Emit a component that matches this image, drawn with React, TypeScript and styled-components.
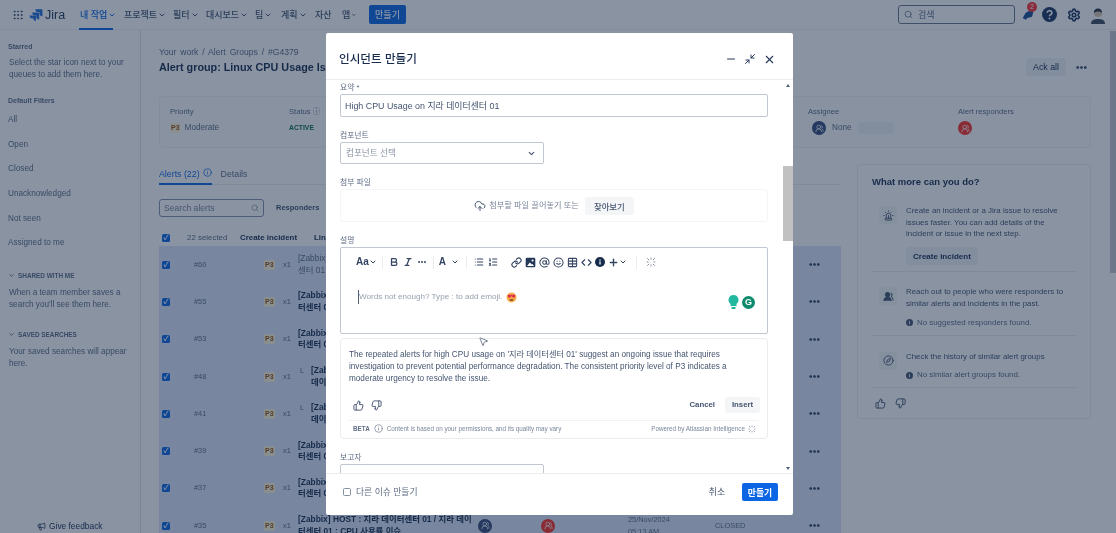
import React from 'react'
import styled, { createGlobalStyle } from 'styled-components'
import {
  AtSign, Bold, ChevronDown, Code, CloudUpload, Compass, Grip, Info, Italic,
  Link, List, ListOrdered, Megaphone, Minimize2, Minus, MoreHorizontal, MousePointer2, Plus, Search,
  Settings, Siren, Smile, Table, ThumbsDown, ThumbsUp, UsersRound, X,
} from 'lucide-react'

const sans = `"Liberation Sans", "Noto Sans CJK KR", sans-serif`
const ink = '#172b4d'
const subtle = '#5e6c84'
const line = '#dfe1e6'

const GlobalStyle = createGlobalStyle`
  html, body { margin: 0; height: 100%; overflow: hidden; background: #fff; }
  * { box-sizing: border-box; }
  #root { height: 100%; }
`

const Page = styled.div`
  position: relative;
  height: 533px;
  overflow: hidden;
  background: #fff;
  color: ${ink};
  font: 9px/12px ${sans};
  filter: blur(0.6px);
`

/* top navigation */
const TopNav = styled.header`
  height: 30px;
  display: flex;
  align-items: center;
  padding: 0 11px 0 12px;
  border-bottom: 1px solid #eef0f3;
`
const Logo = styled.div`
  flex: none;
  display: flex;
  align-items: center;
  gap: 2px;
  width: 51px;
  margin-left: 5px;
  font-size: 12.5px;
  color: #253858;
`
const NavItem = styled.div<{ $active?: boolean; $w: number }>`
  position: relative;
  flex: none;
  width: ${p => p.$w}px;
  height: 30px;
  display: flex;
  align-items: center;
  gap: 1px;
  font-size: 9px;
  font-weight: 500;
  color: ${p => (p.$active ? '#0c66e4' : '#44546f')};
  ${p => p.$active && `
    &::after {
      content: '';
      position: absolute;
      left: -1px;
      bottom: 0;
      width: 34px;
      height: 2px;
      background: #0c66e4;
    }
  `}
`
const NavButton = styled.button`
  width: 37px;
  height: 19px;
  margin-left: 12px;
  padding: 0;
  border: 0;
  border-radius: 2px;
  background: #0c66e4;
  color: #fff;
  font: 500 9px ${sans};
`
const NavRight = styled.div`
  margin-left: auto;
  display: flex;
  align-items: center;
  gap: 10px;
`
const SearchBox = styled.div`
  width: 117px;
  height: 19px;
  display: flex;
  align-items: center;
  gap: 5px;
  padding: 0 5px;
  margin-right: -4px;
  border: 1px solid #6b778c;
  border-radius: 3px;
  color: ${subtle};
`
const Badge = styled.div`
  position: absolute;
  top: -6px;
  left: 6px;
  width: 10px;
  height: 10px;
  border-radius: 50%;
  background: #ff2f2f;
  color: #fff;
  font-size: 7px;
  line-height: 10px;
  text-align: center;
`
const BellWrap = styled.div`
  position: relative;
  width: 14px;
  height: 14px;
  margin-right: -3px;
`

/* layout */
const Shell = styled.div`
  display: flex;
  height: 503px;
`
const Sidebar = styled.aside`
  position: relative;
  width: 141px;
  flex: none;
  padding: 11px 8px 0;
  border-right: 1px solid ${line};
  color: ${subtle};
`
const SideHead = styled.div`
  height: 12px;
  font-weight: 700;
  font-size: 7px;
`
const SideNote = styled.p<{ $mt?: number }>`
  margin: ${p => p.$mt ?? 4}px 0 0 1px;
  font-size: 8.2px;
  line-height: 12px;
  width: 124px;
`
const FilterHead = styled(SideHead)`
  margin-top: 14px;
`
const FilterList = styled.div`
  margin-top: 1px;
`
const FilterItem = styled.div`
  height: 24.6px;
  display: flex;
  align-items: center;
  font-size: 8.2px;
`
const SectionHead = styled.div<{ $gap: number }>`
  display: flex;
  align-items: center;
  gap: 3px;
  height: 12px;
  margin-top: ${p => p.$gap}px;
  font-size: 6.4px;
  font-weight: 700;
`
const Feedback = styled.div`
  position: absolute;
  left: 37px;
  bottom: 1px;
  display: flex;
  align-items: center;
  gap: 3px;
  font-size: 8.4px;
  color: ${ink};
`
const Main = styled.main`
  flex: 1;
  display: flex;
  min-width: 0;
`
const Content = styled.div`
  flex: 1;
  min-width: 0;
  padding: 16px 19px 0 18px;
`
const PageBar = styled.div`
  width: 6px;
  flex: none;
`
const PageThumb = styled.div`
  height: 242px;
  margin-top: 1px;
  background: #c4c7cc;
`
const Crumbs = styled.div`
  height: 12px;
  color: ${subtle};
  font-size: 8.6px;
  word-spacing: 1.5px;
`
const TitleRow = styled.div`
  display: flex;
  align-items: center;
  height: 20px;
  margin-top: -1px;
`
const PageTitle = styled.h1`
  margin: 0;
  font-size: 10.8px;
  font-weight: 700;
  color: ${ink};
`
const TitleActions = styled.div`
  margin-left: auto;
  display: flex;
  align-items: center;
  gap: 6px;
  padding-right: 1px;
`
const GreyButton = styled.button`
  height: 18px;
  padding: 0 7px;
  border: 0;
  border-radius: 3px;
  background: #f1f2f4;
  color: ${ink};
  font: 400 8.8px ${sans};
`
const IconSlot = styled.div`
  width: 18px;
  height: 18px;
  display: grid;
  place-items: center;
  color: ${ink};
`

/* summary card */
const SummaryCard = styled.section`
  height: 52px;
  margin-top: 19px;
  padding: 9px 10px;
  display: grid;
  grid-template-columns: 119px 519px 150px 1fr;
  border: 1px solid #f1f2f4;
  border-radius: 4px;
  background: #fcfcfd;
`
const SummaryLabel = styled.div`
  font-size: 7.6px;
  color: ${subtle};
`
const SummaryValue = styled.div<{ $indent?: number; $gap?: number }>`
  display: flex;
  align-items: center;
  gap: ${p => p.$gap ?? 4}px;
  height: 18px;
  margin: 1px 0 0 ${p => p.$indent ?? 0}px;
  font-size: 8.2px;
  color: ${subtle};
`
const Priority = styled.span`
  justify-self: start;
  padding: 0 1px;
  border-radius: 2px;
  background: #fff7d6;
  color: #974f0c;
  font-size: 7px;
  font-weight: 700;
  line-height: 10px;
`
const Status = styled.span`
  color: #0b6e4a;
  font-size: 6.8px;
  font-weight: 700;
`
const Avatar = styled.div<{ $red?: boolean; $size?: number }>`
  width: ${p => p.$size ?? 14}px;
  height: ${p => p.$size ?? 14}px;
  display: grid;
  place-items: center;
  border-radius: 50%;
  background: ${p => (p.$red ? '#ff2f22' : '#34497a')};
  color: #fff;
`
const Redacted = styled.div`
  width: 36px;
  height: 12px;
  background: #f1f2f4;
`

/* alerts */
const Columns = styled.div`
  display: flex;
  gap: 16px;
  margin-top: 16px;
`
const AlertColumn = styled.div`
  width: 682px;
  flex: none;
`
const Tabs = styled.div`
  height: 21px;
  display: flex;
  gap: 9px;
  border-bottom: 1px solid #ebecf0;
`
const Tab = styled.div<{ $active?: boolean }>`
  height: 21px;
  padding-top: 4px;
  display: flex;
  gap: 3px;
  font-size: 8.8px;
  color: ${p => (p.$active ? '#0c66e4' : subtle)};
  border-bottom: 2px solid ${p => (p.$active ? '#0c66e4' : 'transparent')};
`
const FilterBar = styled.div`
  display: flex;
  align-items: center;
  gap: 12px;
  margin-top: 14px;
  height: 18px;
`
const AlertSearch = styled.div`
  width: 105px;
  height: 18px;
  display: flex;
  align-items: center;
  justify-content: space-between;
  padding: 0 4px;
  border: 1px solid #8590a2;
  border-radius: 3px;
  color: #7a869a;
  font-size: 8.6px;
`
const FilterLabel = styled.div`
  font-size: 7.5px;
  font-weight: 700;
  color: #44546f;
`
const SelectRow = styled.div`
  height: 17px;
  margin-top: 12px;
  padding-left: 3px;
  display: grid;
  grid-template-columns: 25px 53px 74px 1fr;
  align-items: center;
  font-size: 7.9px;
  font-weight: 700;
`
const Muted = styled.span`
  color: ${subtle};
  font-weight: 400;
`
const Check = styled.span`
  width: 8px;
  height: 8px;
  border-radius: 1.5px;
  background: #0c66e4;
  display: grid;
  place-items: center;
  color: #fff;
  font-size: 7px;
  line-height: 8px;
  font-weight: 700;
`
const AlertRow = styled.div`
  height: 37.3px;
  padding-left: 3px;
  display: grid;
  grid-template-columns: 32px 70px 19px 15px 180px 63px 87px 87px 93px 1fr;
  align-items: center;
  background: #dce6f8;
  font-size: 7.4px;
  color: ${subtle};
`
const AlertTitle = styled.div<{ $muted?: boolean; $lead?: boolean }>`
  position: relative;
  padding-left: ${p => (p.$lead ? 13 : 0)}px;
  font-size: 8.4px;
  line-height: 11.5px;
  font-weight: ${p => (p.$muted ? 400 : 700)};
  color: ${p => (p.$muted ? subtle : ink)};
  word-break: ${p => (p.$lead ? 'keep-all' : 'normal')};
`
const LeadMark = styled.span`
  position: absolute;
  left: 2px;
  top: 0;
  font-weight: 400;
  font-size: 7.4px;
  color: ${subtle};
`
const Dots = styled.div`
  display: flex;
  color: ${ink};
`

/* right panel */
const HelpPanel = styled.aside`
  width: 234px;
  height: 255px;
  flex: none;
  padding: 10px 14px 0;
  border: 1px solid #ebecf0;
  border-radius: 4px;
`
const HelpTitle = styled.h2`
  margin: 0;
  font-size: 9.5px;
  line-height: 14px;
  font-weight: 700;
`
const HelpItem = styled.div<{ $mt: number }>`
  display: grid;
  grid-template-columns: 34px 1fr;
  margin-top: ${p => p.$mt}px;
  padding-bottom: 6px;
  border-bottom: 1px solid #ebecf0;
`
const HelpIcon = styled.div`
  width: 18px;
  height: 18px;
  margin: 1px 0 0 7px;
  display: grid;
  place-items: center;
  border-radius: 3px;
  background: #f7f8f9;
  color: #44546f;
`
const HelpText = styled.p`
  margin: 0;
  max-width: 165px;
  font-size: 7.9px;
  line-height: 11.7px;
  color: #44546f;
`
const HelpNote = styled.div`
  display: flex;
  align-items: center;
  gap: 4px;
  margin-top: 7px;
  font-size: 7.9px;
  line-height: 12px;
  color: ${subtle};
`
const HelpButton = styled(GreyButton)`
  display: block;
  margin-top: 7px;
  font-size: 8px;
  font-weight: 700;
`
const Votes = styled.div<{ $gap: number }>`
  display: flex;
  gap: ${p => p.$gap}px;
  color: #44546f;
`
const HelpVotes = styled(Votes)`
  margin: 10px 0 0 3px;
`

/* blanket and modal */
const Blanket = styled.div`
  position: absolute;
  inset: 0;
  padding: 33px 0 0 326px;
  background: rgba(20, 40, 70, 0.5);
`
const Modal = styled.div`
  width: 467px;
  height: 482px;
  display: flex;
  flex-direction: column;
  background: #fff;
  border-radius: 2px;
`
const ModalHeader = styled.div`
  height: 47px;
  flex: none;
  display: flex;
  align-items: center;
  padding: 6px 17px 0 13px;
  border-bottom: 1px solid #ebecf0;
`
const ModalTitle = styled.h2`
  margin: 0;
  font-size: 11.6px;
  font-weight: 500;
  color: #172b4d;
`
const WindowButtons = styled.div`
  margin-left: auto;
  display: flex;
  align-items: center;
  gap: 7px;
  color: #253858;
`
const ModalBody = styled.div`
  flex: 1;
  min-height: 0;
  display: flex;
`
const FormArea = styled.div`
  width: 443px;
  flex: none;
  padding: 2px 0 0 14px;
  overflow: hidden;
`
const Field = styled.div`
  width: 428px;
  margin-bottom: 13px;
`
const FieldLabel = styled.div`
  height: 11px;
  margin-bottom: 1px;
  font-size: 7.8px;
  line-height: 11px;
  color: #5e6c84;
`
const TextInput = styled.div`
  height: 23px;
  display: flex;
  align-items: center;
  padding: 0 4px;
  border: 1px solid #c1c7d0;
  border-radius: 2px;
  font-size: 8.9px;
  color: #44546f;
`
const SelectBox = styled.div`
  width: 204px;
  height: 22px;
  display: flex;
  align-items: center;
  justify-content: space-between;
  padding: 0 7px 0 5px;
  border: 1px solid #c1c7d0;
  border-radius: 2px;
  font-size: 8.6px;
  color: #8993a4;
`
const DropZone = styled.div`
  height: 33px;
  margin-top: 1px;
  display: flex;
  align-items: center;
  justify-content: center;
  gap: 3px;
  border: 1px solid #f4f5f7;
  border-radius: 3px;
  font-size: 8.2px;
  color: #7a869a;
`
const BrowseButton = styled.button`
  width: 49px;
  height: 18px;
  margin-left: 3px;
  padding: 0;
  border: 0;
  border-radius: 3px;
  background: #f4f5f7;
  color: #44546f;
  font: 500 8.4px ${sans};
`
const Editor = styled.div`
  position: relative;
  height: 87px;
  border: 1px solid #c1c7d0;
  border-radius: 2px;
`
const Toolbar = styled.div`
  height: 28px;
  padding-left: 15px;
  display: flex;
  align-items: center;
  color: #344563;
`
const ToolGroup = styled.div<{ $gap: number; $ml?: number }>`
  display: flex;
  align-items: center;
  gap: ${p => p.$gap}px;
  margin-left: ${p => p.$ml ?? 0}px;
`
const ToolSep = styled.div<{ $ml: number; $mr: number }>`
  width: 1px;
  height: 13px;
  margin: 0 ${p => p.$mr}px 0 ${p => p.$ml}px;
  background: #ebecf0;
`
const FontPick = styled.div`
  display: flex;
  align-items: center;
  font-size: 10px;
  font-weight: 700;
`
const Placeholder = styled.div`
  display: flex;
  align-items: center;
  gap: 4px;
  height: 14px;
  margin: 14px 0 0 17px;
  border-left: 1px solid #505f79;
  font-size: 8.1px;
  color: #97a0af;
`
const Grammarly = styled.div`
  position: absolute;
  right: 12px;
  top: 47px;
  display: flex;
  align-items: center;
  gap: 3px;
`
const GrammarlyDot = styled.div`
  width: 13px;
  height: 13px;
  border-radius: 50%;
  background: #0f8a6d;
  color: #fff;
  font-size: 9px;
  font-weight: 700;
  line-height: 13px;
  text-align: center;
`
const Pointer = styled.div`
  position: absolute;
  left: 478px;
  top: 336px;
  color: #6b778c;
`
const AiBox = styled.div`
  width: 428px;
  height: 101px;
  margin: -9px 0 13px;
  padding: 10px 8px 0;
  border: 1px solid #ebecf0;
  border-radius: 4px;
`
const AiText = styled.p`
  margin: 0;
  font-size: 8.2px;
  line-height: 12px;
  color: #44546f;
`
const AiActions = styled.div`
  display: flex;
  align-items: center;
  margin: 12px -1px 0 0;
  height: 16px;
  padding: 0 0 0 4px;
`
const AiButtons = styled.div`
  margin-left: auto;
  display: flex;
  align-items: center;
  gap: 10px;
  font-size: 7.8px;
  font-weight: 700;
  color: #44546f;
`
const InsertButton = styled.div`
  width: 35px;
  height: 16px;
  display: flex;
  align-items: center;
  justify-content: center;
  border-radius: 3px;
  background: #f4f5f7;
`
const AiFoot = styled.div`
  display: flex;
  align-items: center;
  gap: 4px;
  height: 16px;
  margin-top: 7px;
  padding: 0 3px 0 4px;
  border-top: 1px solid #f1f2f4;
  font-size: 6.3px;
  color: #7a869a;
`
const Beta = styled.b`
  font-weight: 700;
  color: #5e6c84;
`
const AiCredit = styled.div`
  margin-left: auto;
  display: flex;
  align-items: center;
  gap: 3px;
`
const ScrollRail = styled.div`
  width: 10px;
  margin-left: 14px;
  flex: none;
  display: flex;
  flex-direction: column;
  align-items: center;
  padding: 4px 0 3px;
`
const Arrow = styled.div<{ $down?: boolean }>`
  width: 0;
  height: 0;
  border-left: 2.5px solid transparent;
  border-right: 2.5px solid transparent;
  ${p => (p.$down ? 'margin-top: auto; border-top: 3px solid #505f79;' : 'border-bottom: 3px solid #505f79;')}
`
const ScrollThumb = styled.div`
  width: 100%;
  height: 75px;
  margin-top: 79px;
  background: #c1c1c1;
`
const ModalFooter = styled.div`
  height: 42px;
  flex: none;
  display: flex;
  align-items: center;
  padding: 0 15px 5px 17px;
  border-top: 1px solid #ebecf0;
`
const RepeatLabel = styled.label`
  display: flex;
  align-items: center;
  gap: 5px;
  font-size: 8.8px;
  color: #5e6c84;
`
const RepeatBox = styled.span`
  width: 8px;
  height: 8px;
  border: 1px solid #8590a2;
  border-radius: 1.5px;
`
const FooterActions = styled.div`
  margin-left: auto;
  display: flex;
  align-items: center;
  gap: 17px;
  font-size: 8.8px;
  color: #44546f;
`
const SubmitButton = styled.button`
  width: 36px;
  height: 18px;
  padding: 0;
  border: 0;
  border-radius: 2px;
  background: #0c66e4;
  color: #fff;
  font: 700 8.8px ${sans};
  white-space: nowrap;
`

const navItems = [
  { label: '내 작업', w: 44, active: true, chevron: true },
  { label: '프로젝트', w: 49, chevron: true },
  { label: '필터', w: 33, chevron: true },
  { label: '대시보드', w: 49, chevron: true },
  { label: '팀', w: 26, chevron: true },
  { label: '계획', w: 34, chevron: true },
  { label: '자산', w: 27 },
  { label: '앱', w: 15, chevron: true },
]

const filters = ['All', 'Open', 'Closed', 'Unacknowledged', 'Not seen', 'Assigned to me']

const alerts = [
  { id: '#60', muted: true, title: '[Zabbix] HOST : 지라 데이터센터 01 / 지라 데이터센터 01 : CPU 사용률 이슈' },
  { id: '#55', title: '[Zabbix] HOST : 지라 데이터센터 01 / 지라 데이터센터 01 : CPU 사용률 이슈' },
  { id: '#53', title: '[Zabbix] HOST : 지라 데이터센터 01 / 지라 데이터센터 01 : CPU 사용률 이슈' },
  { id: '#48', lead: true, title: '[Zabbix] HOST : 지라 데이터센터 01 / 데이터센터 01 : CPU 사용률 이슈' },
  { id: '#41', lead: true, title: '[Zabbix] HOST : 지라 데이터센터 01 / 데이터센터 01 : CPU 사용률 이슈' },
  { id: '#39', title: '[Zabbix] HOST : 지라 데이터센터 01 / 지라 데이터센터 01 : CPU 사용률 이슈' },
  { id: '#37', title: '[Zabbix] HOST : 지라 데이터센터 01 / 지라 데이터센터 01 : CPU 사용률 이슈' },
  { id: '#35', title: '[Zabbix] HOST : 지라 데이터센터 01 / 지라 데이터센터 01 : CPU 사용률 이슈' },
]

const JiraMark = () => (
  <svg width="14" height="14" viewBox="0 0 24 24" fill="#1f6fd6">
    <path d="M22 2H11a5 5 0 0 0 5 5h2v2a5 5 0 0 0 5 5V3a1 1 0 0 0-1-1z" />
    <path d="M16.500 7.500H5.500a5 5 0 0 0 5 5h2v2a5 5 0 0 0 5 5v-11a1 1 0 0 0-1-1z" />
    <path d="M11 13H1a5 5 0 0 0 5 5h2v2a5 5 0 0 0 4 2V14a1 1 0 0 0-1-1z" />
  </svg>
)

const AiSpark = ({ size, color }: { size: number; color: string }) => (
  <svg width={size} height={size} viewBox="0 0 16 16" fill="none" stroke={color} strokeWidth="1.3">
    <path d="M2 2l3 3M14 2l-3 3M2 14l3-3M14 14l-3-3M8 1v3M8 12v3M1 8h3M12 8h3" />
  </svg>
)

const HeartEyes = () => (
  <svg width="11" height="11" viewBox="0 0 20 20">
    <circle cx="10" cy="10" r="9" fill="#f5b04c" />
    <path d="M3 7c0-3 4-3 4.500-1C8 4 12 4 9 9l-3 2C4 10 3 9 3 7zM17 7c0-3-4-3-4.500-1C12 4 8 4 11 9l3 2c2-1 3-2 3-4z" fill="#e0314b" />
    <path d="M6 13h8c-1 4-7 4-8 0z" fill="#7a3b1d" />
  </svg>
)

const FilledInfo = ({ size, color = ink }: { size: number; color?: string }) => (
  <svg width={size} height={size} viewBox="0 0 16 16">
    <circle cx="8" cy="8" r="8" fill={color} />
    <path d="M7 7h2v5H7zM7 4h2v2H7z" fill="#fff" />
  </svg>
)

const FilledHelp = () => (
  <svg width="15" height="15" viewBox="0 0 16 16">
    <circle cx="8" cy="8" r="8" fill="#1d3461" />
    <path d="M5.500 6.200a2.500 2.300 0 1 1 3.700 2c-.8.500-1.200.8-1.200 1.600" fill="none" stroke="#fff" strokeWidth="1.700" />
    <circle cx="8" cy="12.200" r="1" fill="#fff" />
  </svg>
)

const Portrait = () => (
  <svg width="14" height="18" viewBox="0 0 14 18">
    <path d="M0 18c0-4 3-5 7-5s7 1 7 5z" fill="#3d4a5c" />
    <circle cx="7" cy="7" r="4" fill="#d9c5b0" />
    <path d="M3 7c-1-5 8-7 8 0-2-2-6-2-8 0z" fill="#27303d" />
  </svg>
)

const Ribbon = () => (
  <svg width="14" height="14" viewBox="0 0 24 24" fill="#1b4d94">
    <path d="M18 3 8 8l-5 9 5 3 3-3 8-2 2-8z" />
  </svg>
)

const FilledImage = () => (
  <svg width="11" height="11" viewBox="0 0 16 16">
    <rect x="1" y="1" width="14" height="14" rx="2" fill="#253858" />
    <circle cx="11" cy="5" r="1.500" fill="#fff" />
    <path d="M3 13l4-5 3 3 1-1 2 3z" fill="#fff" />
  </svg>
)

const Ellipsis = () => <MoreHorizontal size={13} strokeWidth={3} />

export default function App() {
  return (
    <Page>
      <GlobalStyle />
      <TopNav>
        <Grip size={12} color="#344563" />
        <Logo><JiraMark />Jira</Logo>
        {navItems.map(item => (
          <NavItem key={item.label} $w={item.w} $active={item.active}>
            {item.label}
            {item.chevron && <ChevronDown size={8} strokeWidth={3} />}
          </NavItem>
        ))}
        <NavButton>만들기</NavButton>
        <NavRight>
          <SearchBox><Search size={9} />검색</SearchBox>
          <BellWrap><Ribbon /><Badge>2</Badge></BellWrap>
          <FilledHelp />
          <Settings size={14} color="#1d3461" strokeWidth={2.8} />
          <Portrait />
        </NavRight>
      </TopNav>

      <Shell>
        <Sidebar>
          <SideHead>Starred</SideHead>
          <SideNote>Select the star icon next to your queues to add them here.</SideNote>
          <FilterHead>Default Filters</FilterHead>
          <FilterList>
            {filters.map(f => <FilterItem key={f}>{f}</FilterItem>)}
          </FilterList>
          <SectionHead $gap={14}><ChevronDown size={7} strokeWidth={3} />SHARED WITH ME</SectionHead>
          <SideNote $mt={5}>When a team member saves a search you'll see them here.</SideNote>
          <SectionHead $gap={18}><ChevronDown size={7} strokeWidth={3} />SAVED SEARCHES</SectionHead>
          <SideNote $mt={5}>Your saved searches will appear here.</SideNote>
          <Feedback><Megaphone size={9} />Give feedback</Feedback>
        </Sidebar>

        <Main>
          <Content>
            <Crumbs>Your work / Alert Groups / #G4379</Crumbs>
            <TitleRow>
              <PageTitle>Alert group: Linux CPU Usage Issue</PageTitle>
              <TitleActions>
                <GreyButton>Ack all</GreyButton>
                <IconSlot><Ellipsis /></IconSlot>
              </TitleActions>
            </TitleRow>

            <SummaryCard>
              <div>
                <SummaryLabel>Priority</SummaryLabel>
                <SummaryValue><Priority>P3</Priority>Moderate</SummaryValue>
              </div>
              <div>
                <SummaryLabel>Status ⓘ</SummaryLabel>
                <SummaryValue><Status>ACTIVE</Status></SummaryValue>
              </div>
              <div>
                <SummaryLabel>Assignee</SummaryLabel>
                <SummaryValue $indent={4} $gap={6}><Avatar><UsersRound size={9} /></Avatar>None<Redacted /></SummaryValue>
              </div>
              <div>
                <SummaryLabel>Alert responders</SummaryLabel>
                <SummaryValue><Avatar $red><UsersRound size={9} /></Avatar></SummaryValue>
              </div>
            </SummaryCard>

            <Columns>
              <AlertColumn>
                <Tabs>
                  <Tab $active>Alerts (22) <Info size={9} /></Tab>
                  <Tab>Details</Tab>
                </Tabs>
                <FilterBar>
                  <AlertSearch>Search alerts<Search size={8} /></AlertSearch>
                  <FilterLabel>Responders</FilterLabel>
                </FilterBar>
                <SelectRow>
                  <Check>✓</Check>
                  <Muted>22 selected</Muted>
                  <span>Create incident</span>
                  <span>Link</span>
                </SelectRow>
                {alerts.map(a => (
                  <AlertRow key={a.id}>
                    <Check>✓</Check>
                    <span>{a.id}</span>
                    <Priority>P3</Priority>
                    <span>x1</span>
                    <AlertTitle $muted={a.muted} $lead={a.lead}>
                      {a.lead && <LeadMark>L</LeadMark>}
                      {a.title}
                    </AlertTitle>
                    <Avatar><UsersRound size={9} /></Avatar>
                    <Avatar $red><UsersRound size={9} /></Avatar>
                    <span>25/Nov/2024<br />05:13 AM</span>
                    <span>CLOSED</span>
                    <Dots><Ellipsis /></Dots>
                  </AlertRow>
                ))}
              </AlertColumn>

              <HelpPanel>
                <HelpTitle>What more can you do?</HelpTitle>
                <HelpItem $mt={16}>
                  <HelpIcon><Siren size={11} /></HelpIcon>
                  <div>
                    <HelpText>Create an incident or a Jira issue to resolve issues faster. You can add details of the incident or issue in the next step.</HelpText>
                    <HelpButton>Create incident</HelpButton>
                  </div>
                </HelpItem>
                <HelpItem $mt={14}>
                  <HelpIcon><UsersRound size={11} fill="#44546f" /></HelpIcon>
                  <div>
                    <HelpText>Reach out to people who were responders to similar alerts and incidents in the past.</HelpText>
                    <HelpNote><FilledInfo size={7} color="#44546f" />No suggested responders found.</HelpNote>
                  </div>
                </HelpItem>
                <HelpItem $mt={15}>
                  <HelpIcon><Compass size={11} /></HelpIcon>
                  <div>
                    <HelpText>Check the history of similar alert groups</HelpText>
                    <HelpNote><FilledInfo size={7} color="#44546f" />No similar alert groups found.</HelpNote>
                  </div>
                </HelpItem>
                <HelpVotes $gap={9}><ThumbsUp size={11} /><ThumbsDown size={11} /></HelpVotes>
              </HelpPanel>
            </Columns>
          </Content>
          <PageBar><PageThumb /></PageBar>
        </Main>
      </Shell>

      <Blanket>
        <Modal>
          <ModalHeader>
            <ModalTitle>인시던트 만들기</ModalTitle>
            <WindowButtons>
              <Minus size={12} />
              <Minimize2 size={12} />
              <X size={13} />
            </WindowButtons>
          </ModalHeader>
          <ModalBody>
            <FormArea>
              <Field>
                <FieldLabel>요약 *</FieldLabel>
                <TextInput>High CPU Usage on 지라 데이터센터 01</TextInput>
              </Field>
              <Field>
                <FieldLabel>컴포넌트</FieldLabel>
                <SelectBox>컴포넌트 선택<ChevronDown size={9} strokeWidth={3} color="#44546f" /></SelectBox>
              </Field>
              <Field>
                <FieldLabel>첨부 파일</FieldLabel>
                <DropZone>
                  <CloudUpload size={12} color="#44546f" />
                  첨부할 파일 끌어놓기 또는
                  <BrowseButton>찾아보기</BrowseButton>
                </DropZone>
              </Field>
              <Field>
                <FieldLabel>설명</FieldLabel>
                <Editor>
                  <Toolbar>
                    <FontPick>Aa<ChevronDown size={8} strokeWidth={3} /></FontPick>
                    <ToolSep $ml={5} $mr={6} />
                    <ToolGroup $gap={4}>
                      <Bold size={10} strokeWidth={3} />
                      <Italic size={10} strokeWidth={3} />
                      <MoreHorizontal size={10} strokeWidth={3} />
                    </ToolGroup>
                    <ToolSep $ml={6} $mr={5} />
                    <ToolGroup $gap={5}>
                      <FontPick>A</FontPick>
                      <ChevronDown size={8} strokeWidth={3} />
                    </ToolGroup>
                    <ToolSep $ml={7} $mr={7} />
                    <ToolGroup $gap={4}>
                      <List size={10} strokeWidth={2.5} />
                      <ListOrdered size={10} strokeWidth={2.5} />
                    </ToolGroup>
                    <ToolGroup $gap={3} $ml={13}>
                      <Link size={11} strokeWidth={2.5} />
                      <FilledImage />
                      <AtSign size={11} strokeWidth={2.2} />
                      <Smile size={11} strokeWidth={2.2} />
                      <Table size={11} strokeWidth={2.2} />
                      <Code size={11} strokeWidth={2.5} />
                      <FilledInfo size={10} />
                      <ToolGroup $gap={0}>
                        <Plus size={11} strokeWidth={3} />
                        <ChevronDown size={8} strokeWidth={3} />
                      </ToolGroup>
                    </ToolGroup>
                    <ToolSep $ml={9} $mr={9} />
                    <AiSpark size={10} color="#6b778c" />
                  </Toolbar>
                  <Placeholder>
                    Words not enough? Type : to add emoji.
                    <HeartEyes />
                  </Placeholder>
                  <Grammarly>
                    <svg width="11" height="14" viewBox="0 0 11 14" fill="#22b8a0">
                      <path d="M5.500 0a5 5 0 0 1 3 9v2h-6V9a5 5 0 0 1 3-9zM3.500 12h4v2h-4z" />
                    </svg>
                    <GrammarlyDot>G</GrammarlyDot>
                  </Grammarly>
                </Editor>
              </Field>
              <AiBox>
                <AiText>
                  The repeated alerts for high CPU usage on '지라 데이터센터 01' suggest an ongoing issue that requires investigation to prevent potential performance degradation. The consistent priority level of P3 indicates a moderate urgency to resolve the issue.
                </AiText>
                <AiActions>
                  <Votes $gap={7}><ThumbsUp size={11} /><ThumbsDown size={11} /></Votes>
                  <AiButtons>
                    Cancel
                    <InsertButton>Insert</InsertButton>
                  </AiButtons>
                </AiActions>
                <AiFoot>
                  <Beta>BETA</Beta>
                  <Info size={9} />
                  Content is based on your permissions, and its quality may vary
                  <AiCredit>Powered by Atlassian Intelligence <AiSpark size={8} color="#7a869a" /></AiCredit>
                </AiFoot>
              </AiBox>
              <Field>
                <FieldLabel>보고자</FieldLabel>
                <SelectBox />
              </Field>
            </FormArea>
            <ScrollRail>
              <Arrow />
              <ScrollThumb />
              <Arrow $down />
            </ScrollRail>
          </ModalBody>
          <ModalFooter>
            <RepeatLabel><RepeatBox />다른 이슈 만들기</RepeatLabel>
            <FooterActions>
              취소
              <SubmitButton>만들기</SubmitButton>
            </FooterActions>
          </ModalFooter>
        </Modal>
      </Blanket>

      <Pointer><MousePointer2 size={11} fill="#fff" /></Pointer>
    </Page>
  )
}
